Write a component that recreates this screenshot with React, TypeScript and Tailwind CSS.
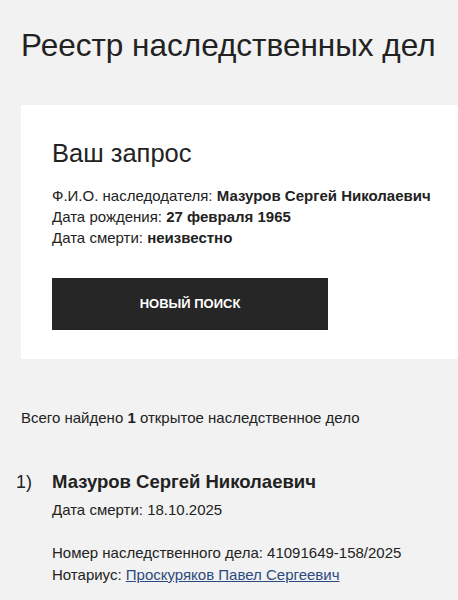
export default function App() {
  return (
    <div className="min-h-[600px] overflow-hidden bg-[#f2f2f2] font-['Liberation_Sans',Arial,sans-serif] text-[#222]">
      <h1 className="px-[21px] pt-[26px] text-[31.5px] leading-[38px] font-normal">
        Реестр наследственных дел
      </h1>

      <section className="ml-[21px] mt-[41px] bg-white pl-[31px] pt-[33px] pb-[29px]">
        <h2 className="text-[25.5px] leading-[30px] font-normal">Ваш запрос</h2>
        <div className="mt-[17px] text-[15px] leading-[21px]">
          <p>
            Ф.И.О. наследодателя: <b>Мазуров Сергей Николаевич</b>
          </p>
          <p>
            Дата рождения: <b>27 февраля 1965</b>
          </p>
          <p>
            Дата смерти: <b>неизвестно</b>
          </p>
        </div>
        <button className="mt-[30px] flex h-[52px] w-[276px] items-center justify-center bg-[#262626] text-[13px] font-bold uppercase text-white">
          Новый поиск
        </button>
      </section>

      <p className="mt-[49px] px-[21px] text-[15px] leading-[20px]">
        Всего найдено <b>1</b> открытое наследственное дело
      </p>

      <ol className="mt-[42px]">
        <li className="flex">
          <span className="w-[52px] shrink-0 pl-[16px] text-[18px] leading-[24px]">1)</span>
          <div>
            <p className="text-[18.5px] leading-[24px] font-bold">Мазуров Сергей Николаевич</p>
            <p className="mt-[6px] text-[15px] leading-[20px]">Дата смерти: 18.10.2025</p>
            <div className="mt-[22px] text-[15px] leading-[22px]">
              <p>Номер наследственного дела: 41091649-158/2025</p>
              <p>
                Нотариус:{" "}
                <a href="#" className="text-[#2b4a80] underline">
                  Проскуряков Павел Сергеевич
                </a>
              </p>
            </div>
          </div>
        </li>
      </ol>
    </div>
  );
}
